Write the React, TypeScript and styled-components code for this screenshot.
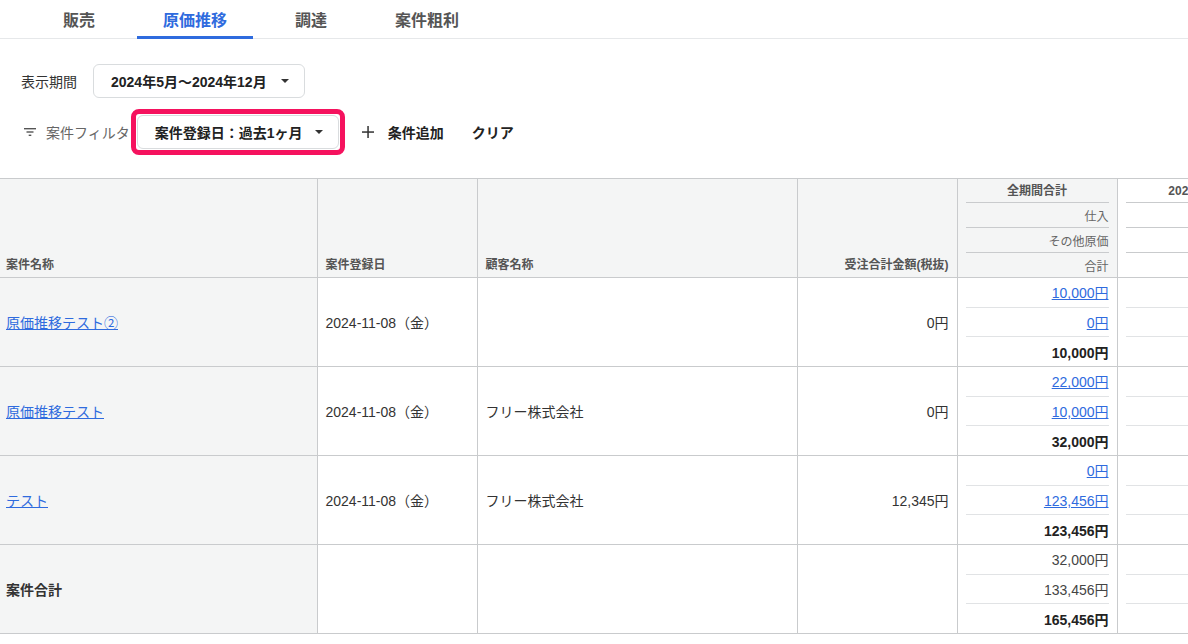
import React from 'react';
import styled, { createGlobalStyle } from 'styled-components';

const GlobalStyle = createGlobalStyle`
  html, body {
    margin: 0;
    padding: 0;
    background: #ffffff;
  }
  body {
    font-family: "Liberation Sans", "Noto Sans CJK JP", sans-serif;
    color: #333333;
    overflow: hidden;
  }
`;

const Page = styled.div`
  width: 1188px;
  height: 644px;
  overflow: hidden;
`;

const TabBar = styled.div`
  display: flex;
  padding-left: 21px;
  border-bottom: 1px solid #e6e8ea;
`;

const Tab = styled.div<{ $active?: boolean }>`
  width: 116px;
  height: 39px;
  box-sizing: border-box;
  display: flex;
  align-items: center;
  justify-content: center;
  padding-top: 2px;
  font-size: 16px;
  font-weight: bold;
  color: ${p => (p.$active ? '#2f6bde' : '#555555')};
  border-bottom: 3px solid ${p => (p.$active ? '#2f6bde' : 'transparent')};
  margin-bottom: -1px;
`;

const Controls = styled.div`
  padding: 25px 0 0 21px;
  display: flex;
  flex-direction: column;
  gap: 11px;
`;

const PeriodRow = styled.div`
  display: flex;
  align-items: center;
  gap: 16px;
`;

const Label = styled.span`
  font-size: 14px;
  color: #333333;
`;

const SelectButton = styled.div<{ $width: number }>`
  width: ${p => p.$width}px;
  height: 34px;
  box-sizing: border-box;
  border: 1px solid #d9dcde;
  border-radius: 6px;
  background: #ffffff;
  display: flex;
  align-items: center;
  justify-content: space-between;
  padding: 0 15px 0 17px;
  font-size: 14px;
  font-weight: bold;
  color: #222222;
`;

const Caret = styled.span`
  width: 0;
  height: 0;
  border-left: 4px solid transparent;
  border-right: 4px solid transparent;
  border-top: 4px solid #333333;
`;

const FilterRow = styled.div`
  display: flex;
  align-items: center;
`;

const FilterLabel = styled.span`
  display: flex;
  align-items: center;
  gap: 10px;
  padding-left: 3px;
  font-size: 14px;
  color: #666666;
  margin-right: 1px;
`;

const Highlight = styled.div`
  border: 5px solid #f5125e;
  border-radius: 8px;
  padding: 1px;
`;

const TextButton = styled.div`
  display: flex;
  align-items: center;
  gap: 14px;
  font-size: 14px;
  font-weight: bold;
  color: #222222;
  margin-left: 17px;
  & + & {
    margin-left: 28px;
  }
`;

const TableWrap = styled.div`
  margin-top: 23px;
  overflow: hidden;
`;

const Table = styled.table`
  border-collapse: collapse;
  table-layout: fixed;
  width: 1277px;
  font-size: 14px;
`;

const Th = styled.th<{ $align?: string; $width: number; $plain?: boolean }>`
  width: ${p => p.$width}px;
  height: 98px;
  box-sizing: border-box;
  border: 1px solid #c9cbcd;
  background: ${p => (p.$plain ? '#ffffff' : '#f4f5f5')};
  vertical-align: bottom;
  text-align: ${p => p.$align || 'left'};
  padding: 0 8px 5px 8px;
  font-size: 12px;
  font-weight: bold;
  color: #555555;
  &:first-child {
    border-left: none;
    padding-left: 6px;
  }
`;

const MonthTh = styled(Th)`
  padding: 0 8px;
  vertical-align: top;
`;

const MonthHead = styled.div`
  display: flex;
  flex-direction: column;
`;

const MonthTitle = styled.div`
  height: 23px;
  display: flex;
  align-items: center;
  justify-content: center;
  padding-bottom: 2px;
  box-sizing: border-box;
  font-weight: bold;
  color: #555555;
  white-space: nowrap;
`;

const MonthSub = styled.div`
  height: 24px;
  border-top: 1px solid #c9cbcd;
  display: flex;
  align-items: center;
  justify-content: flex-end;
  font-weight: normal;
  color: #666666;
`;

const Td = styled.td<{ $align?: string; $sticky?: boolean; $bold?: boolean }>`
  height: 88px;
  box-sizing: border-box;
  border: 1px solid #c9cbcd;
  background: ${p => (p.$sticky ? '#f4f5f5' : '#ffffff')};
  vertical-align: middle;
  text-align: ${p => p.$align || 'left'};
  padding: 0 8px;
  color: #333333;
  font-weight: ${p => (p.$bold ? 'bold' : 'normal')};
  &:first-child {
    border-left: none;
    padding-left: 6px;
  }
`;

const MonthTd = styled(Td)`
  padding: 0 8px;
`;

const SubStack = styled.div`
  display: flex;
  flex-direction: column;
  height: 88px;
`;

const SubCell = styled.div<{ $bold?: boolean }>`
  flex: 1;
  display: flex;
  align-items: center;
  justify-content: flex-end;
  font-weight: ${p => (p.$bold ? 'bold' : 'normal')};
  color: ${p => (p.$bold ? '#222222' : '#444444')};
  & + & {
    border-top: 1px solid #e1e3e5;
  }
`;

const Link = styled.a`
  color: #2f6bde;
  text-decoration: underline;
  cursor: pointer;
`;

const FilterIcon = () => (
  <svg width="12" height="10" viewBox="0 0 12 10">
    <rect x="0" y="1" width="12" height="1.4" fill="#555" />
    <rect x="2.5" y="4.3" width="7" height="1.4" fill="#555" />
    <rect x="4.7" y="7.6" width="2.6" height="1.4" fill="#555" />
  </svg>
);

const PlusIcon = () => (
  <svg width="12" height="12" viewBox="0 0 12 12">
    <rect x="5.3" y="0" width="1.5" height="12" fill="#333" />
    <rect x="0" y="5.3" width="12" height="1.5" fill="#333" />
  </svg>
);

type Row = {
  name: string;
  date: string;
  customer: string;
  amount: string;
  purchase: string;
  other: string;
  total: string;
};

const rows: Row[] = [
  { name: '原価推移テスト②', date: '2024-11-08（金）', customer: '', amount: '0円', purchase: '10,000円', other: '0円', total: '10,000円' },
  { name: '原価推移テスト', date: '2024-11-08（金）', customer: 'フリー株式会社', amount: '0円', purchase: '22,000円', other: '10,000円', total: '32,000円' },
  { name: 'テスト', date: '2024-11-08（金）', customer: 'フリー株式会社', amount: '12,345円', purchase: '0円', other: '123,456円', total: '123,456円' },
];

const tabs = ['販売', '原価推移', '調達', '案件粗利'];

const App: React.FC = () => {
  return (
    <Page>
      <GlobalStyle />
      <TabBar>
        {tabs.map(tab => (
          <Tab key={tab} $active={tab === '原価推移'}>
            {tab}
          </Tab>
        ))}
      </TabBar>

      <Controls>
        <PeriodRow>
          <Label>表示期間</Label>
          <SelectButton $width={212}>
            2024年5月〜2024年12月
            <Caret />
          </SelectButton>
        </PeriodRow>
        <FilterRow>
          <FilterLabel>
            <FilterIcon />
            案件フィルタ
          </FilterLabel>
          <Highlight>
            <SelectButton $width={202}>
              案件登録日：過去1ヶ月
              <Caret />
            </SelectButton>
          </Highlight>
          <TextButton>
            <PlusIcon />
            条件追加
          </TextButton>
          <TextButton>クリア</TextButton>
        </FilterRow>
      </Controls>

      <TableWrap>
        <Table>
          <thead>
            <tr>
              <Th $width={317}>案件名称</Th>
              <Th $width={160}>案件登録日</Th>
              <Th $width={320}>顧客名称</Th>
              <Th $width={160} $align="right">受注合計金額(税抜)</Th>
              <MonthTh $width={160}>
                <MonthHead>
                  <MonthTitle>全期間合計</MonthTitle>
                  <MonthSub>仕入</MonthSub>
                  <MonthSub>その他原価</MonthSub>
                  <MonthSub>合計</MonthSub>
                </MonthHead>
              </MonthTh>
              <MonthTh $width={160} $plain>
                <MonthHead>
                  <MonthTitle>2024年5月</MonthTitle>
                  <MonthSub />
                  <MonthSub />
                  <MonthSub />
                </MonthHead>
              </MonthTh>
            </tr>
          </thead>
          <tbody>
            {rows.map(row => (
              <tr key={row.name}>
                <Td $sticky>
                  <Link>{row.name}</Link>
                </Td>
                <Td>{row.date}</Td>
                <Td>{row.customer}</Td>
                <Td $align="right">{row.amount}</Td>
                <MonthTd>
                  <SubStack>
                    <SubCell><Link>{row.purchase}</Link></SubCell>
                    <SubCell><Link>{row.other}</Link></SubCell>
                    <SubCell $bold>{row.total}</SubCell>
                  </SubStack>
                </MonthTd>
                <MonthTd>
                  <SubStack>
                    <SubCell />
                    <SubCell />
                    <SubCell $bold />
                  </SubStack>
                </MonthTd>
              </tr>
            ))}
            <tr>
              <Td $sticky $bold>案件合計</Td>
              <Td />
              <Td />
              <Td />
              <MonthTd>
                <SubStack>
                  <SubCell>32,000円</SubCell>
                  <SubCell>133,456円</SubCell>
                  <SubCell $bold>165,456円</SubCell>
                </SubStack>
              </MonthTd>
              <MonthTd>
                <SubStack>
                  <SubCell />
                  <SubCell />
                  <SubCell $bold />
                </SubStack>
              </MonthTd>
            </tr>
          </tbody>
        </Table>
      </TableWrap>
    </Page>
  );
};

export default App;
